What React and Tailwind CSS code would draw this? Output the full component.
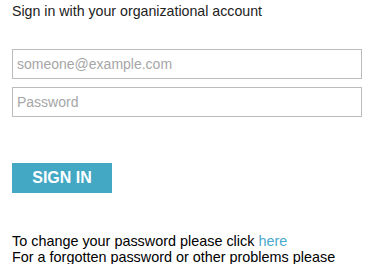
export default function App() {
  return (
    <div className="min-h-[264px] bg-white px-3 pt-[3px] font-['Liberation_Sans',Arial,sans-serif] text-[14px] text-[#222]">
      <div className="text-[14.2px] leading-[17px]">Sign in with your organizational account</div>
      <form className="mt-[29px] flex flex-col gap-2" onSubmit={(e) => e.preventDefault()}>
        <input
          type="email"
          placeholder="someone@example.com"
          className="h-[30px] w-[350px] border border-[#bbb] px-[4px] text-[14px] text-[#222] outline-none placeholder:text-[#a6a6a6]"
        />
        <input
          type="password"
          placeholder="Password"
          className="h-[30px] w-[350px] border border-[#bbb] px-[4px] text-[14px] text-[#222] outline-none placeholder:text-[#a6a6a6]"
        />
        <button
          type="submit"
          className="mt-[38px] h-[30px] w-[100px] bg-[#42a8c4] text-[16px] font-bold text-white"
        >
          SIGN IN
        </button>
      </form>
      <div className="mt-[40px] text-[14.4px] leading-[16px] text-black">
        <div>
          To change your password please click <a href="#" className="text-[#49a9cc]">here</a>
        </div>
        <div>For a forgotten password or other problems please</div>
      </div>
    </div>
  );
}
